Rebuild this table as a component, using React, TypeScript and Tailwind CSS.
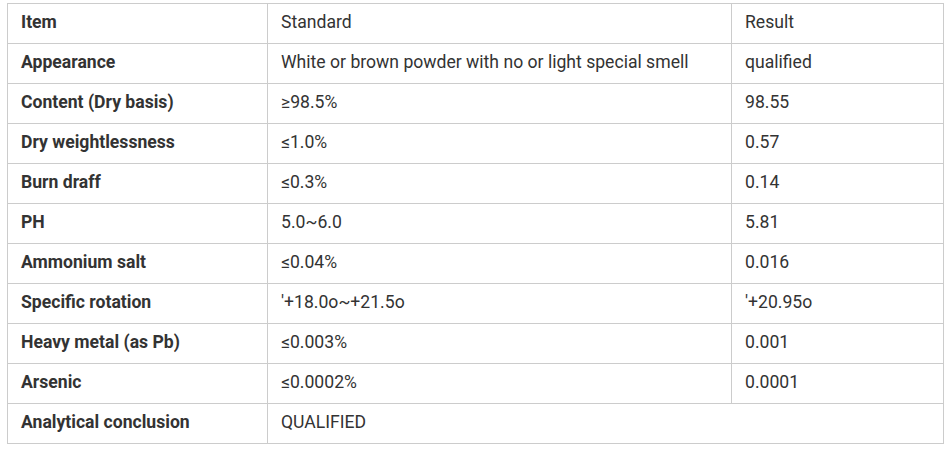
const rows: [string, string, string][] = [
  ["Appearance", "White or brown powder with no or light special smell", "qualified"],
  ["Content (Dry basis)", "≥98.5%", "98.55"],
  ["Dry weightlessness", "≤1.0%", "0.57"],
  ["Burn draff", "≤0.3%", "0.14"],
  ["PH", "5.0~6.0", "5.81"],
  ["Ammonium salt", "≤0.04%", "0.016"],
  ["Specific rotation", "'+18.0o~+21.5o", "'+20.95o"],
  ["Heavy metal (as Pb)", "≤0.003%", "0.001"],
  ["Arsenic", "≤0.0002%", "0.0001"],
];

const cell = "border border-[#cccccc] h-[40px] pl-[13px] pr-[13px] pt-0 pb-[2px] text-left align-middle";

export default function App() {
  return (
    <div className="bg-white min-h-[449px] pt-[3px] pl-[7px] font-['Roboto',sans-serif] text-[17.6px] text-[#333333]">
      <table className="border-collapse w-[936px] table-fixed">
        <colgroup>
          <col className="w-[260px]" />
          <col className="w-[464px]" />
          <col className="w-[212px]" />
        </colgroup>
        <tbody>
          <tr>
            <td className={`${cell} font-bold`}>Item</td>
            <td className={cell}>Standard</td>
            <td className={cell}>Result</td>
          </tr>
          {rows.map(([item, std, res]) => (
            <tr key={item}>
              <td className={`${cell} font-bold`}>{item}</td>
              <td className={cell}>{std}</td>
              <td className={cell}>{res}</td>
            </tr>
          ))}
          <tr>
            <td className={`${cell} font-bold`}>Analytical conclusion</td>
            <td className={cell} colSpan={2}>QUALIFIED</td>
          </tr>
        </tbody>
      </table>
    </div>
  );
}
